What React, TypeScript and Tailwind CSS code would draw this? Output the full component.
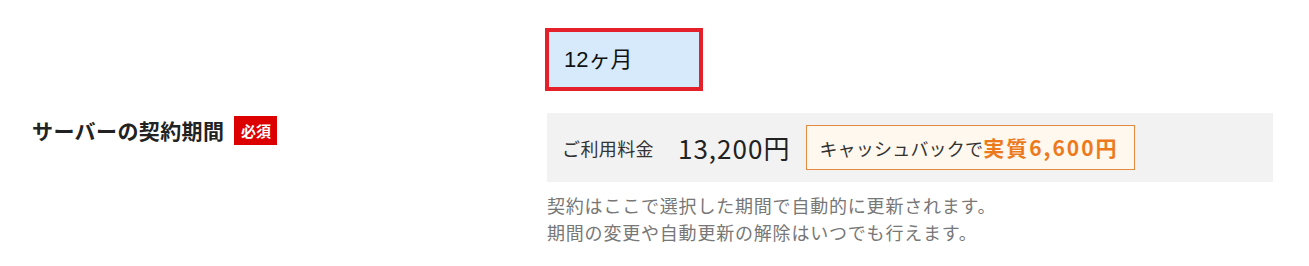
import React from 'react'

const font = { fontFamily: '"Noto Sans CJK JP", "Noto Sans", sans-serif' }

export default function App() {
  return (
    <div className="w-[1309px] h-[266px] bg-white text-[#222] flex" style={font}>
      {/* label column */}
      <div className="w-[545px] shrink-0 pl-8 flex items-center pb-[6px]">
        <span className="text-[21px] font-bold leading-none tracking-[0.4px]">サーバーの契約期間</span>
        <span className="ml-[10px] w-[43px] h-[29px] bg-[#dc0000] text-white text-[15px] font-bold flex items-center justify-center leading-none">
          必須
        </span>
      </div>

      {/* input column */}
      <div className="pt-[28px] w-[728px] shrink-0">
        <div className="w-[158px] h-[63px] border-4 border-[#e4212b] bg-[#d6eafb] pl-[15px] flex items-center">
          <span className="text-[22px] leading-none text-[#111]" style={{ fontFamily: '"Liberation Sans", "Noto Sans CJK JP", sans-serif' }}>
            12ヶ月
          </span>
        </div>

        <div className="mt-[22px] ml-[2px] w-[726px] h-[69px] bg-[#f2f2f2] pl-[15px] flex items-center">
          <span className="text-[18px] leading-none text-[#333] tracking-[0.4px]">ご利用料金</span>
          <span className="ml-[24px] text-[26px] leading-none text-[#222] tracking-[1px]">13,200円</span>
          <div className="ml-[16px] w-[329px] h-[45px] border border-[#e58a40] bg-[#fff8ee] pl-3 flex items-center">
            <span className="text-[18px] leading-none text-[#333] tracking-[0.2px]">キャッシュバックで</span>
            <span className="text-[21px] leading-none font-bold text-[#ec7a1c] tracking-[2px]">実質6,600円</span>
          </div>
        </div>

        <p className="mt-[10px] ml-[2px] text-[18px] leading-[27px] text-[#777] tracking-[0.8px]">
          契約はここで選択した期間で自動的に更新されます。
          <br />
          期間の変更や自動更新の解除はいつでも行えます。
        </p>
      </div>
    </div>
  )
}
